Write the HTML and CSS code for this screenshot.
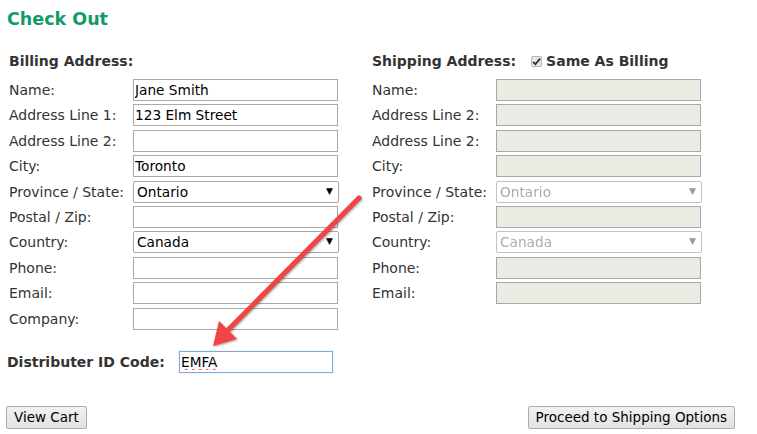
FILE: index.html
```html
<!DOCTYPE html>
<html lang="en">
<head>
    <meta charset="UTF-8">
    <title>Check Out</title>
    <link rel="stylesheet" href="styles.css">
</head>
<body>
    <h1 class="page-title">Check Out</h1>

    <div class="columns">
        <section class="address">
            <h2 class="address-title">Billing Address:</h2>
            <div class="fields">
                <label>Name:</label>
                <input type="text" class="field-input" value="Jane Smith">
                <label>Address Line 1:</label>
                <input type="text" class="field-input" value="123 Elm Street">
                <label>Address Line 2:</label>
                <input type="text" class="field-input">
                <label>City:</label>
                <input type="text" class="field-input" value="Toronto">
                <label>Province / State:</label>
                <div class="select-wrap">
                    <select class="field-select"><option>Ontario</option></select>
                </div>
                <label>Postal / Zip:</label>
                <input type="text" class="field-input">
                <label>Country:</label>
                <div class="select-wrap">
                    <select class="field-select"><option>Canada</option></select>
                </div>
                <label>Phone:</label>
                <input type="text" class="field-input">
                <label>Email:</label>
                <input type="text" class="field-input">
                <label>Company:</label>
                <input type="text" class="field-input">
            </div>
        </section>

        <section class="address">
            <h2 class="address-title">
                Shipping Address:
                <span class="same-as">
                    <span class="check-box">
                        <svg width="9" height="9" viewBox="0 0 9 9"><path d="M1 4.8 L3.4 7.2 L8 1.6" fill="none" stroke="#333" stroke-width="1.8"/></svg>
                    </span>
                    Same As Billing
                </span>
            </h2>
            <div class="fields">
                <label>Name:</label>
                <input type="text" class="field-input" disabled>
                <label>Address Line 2:</label>
                <input type="text" class="field-input" disabled>
                <label>Address Line 2:</label>
                <input type="text" class="field-input" disabled>
                <label>City:</label>
                <input type="text" class="field-input" disabled>
                <label>Province / State:</label>
                <div class="select-wrap disabled">
                    <select class="field-select" disabled><option>Ontario</option></select>
                </div>
                <label>Postal / Zip:</label>
                <input type="text" class="field-input" disabled>
                <label>Country:</label>
                <div class="select-wrap disabled">
                    <select class="field-select" disabled><option>Canada</option></select>
                </div>
                <label>Phone:</label>
                <input type="text" class="field-input" disabled>
                <label>Email:</label>
                <input type="text" class="field-input" disabled>
            </div>
        </section>
    </div>

    <div class="distributor">
        <label class="distributor-label">Distributer ID Code:</label>
        <input type="text" class="distributor-input" value="EMFA">
    </div>

    <div class="actions">
        <button class="action-button">View Cart</button>
        <button class="action-button">Proceed to Shipping Options</button>
    </div>

    <!-- annotation arrow drawn over the form -->
    <svg class="annotation" width="757" height="434" viewBox="0 0 757 434">
        <g class="annotation-arrow">
            <line x1="359" y1="198" x2="228" y2="330" stroke="#f04545" stroke-width="5" stroke-linecap="round"/>
            <polygon points="213,346 219,321 237,339" fill="#f04545"/>
        </g>
    </svg>
</body>
</html>
```

FILE: styles.css
```css
body {
    margin: 0;
    padding: 0 7px;
    font-family: "DejaVu Sans", Verdana, sans-serif;
    font-size: 14px;
    color: #333;
    background-color: #ffffff;
    position: relative;
}
.page-title {
    margin: 0;
    padding-top: 8px;
    font-size: 17.5px;
    line-height: 22px;
    color: #129a69;
}
.columns {
    display: grid;
    grid-template-columns: 363px 1fr;
    margin-top: 21px;
    padding-left: 2px;
}
.address-title {
    margin: 0 0 8px 0;
    font-size: 14px;
    line-height: 20px;
    display: flex;
    align-items: center;
}
.same-as {
    display: inline-flex;
    align-items: center;
    margin-left: 15px;
}
.check-box {
    width: 11px;
    height: 11px;
    border: 1px solid #b5b5b5;
    border-radius: 2px;
    background-color: #e6e6e6;
    display: inline-flex;
    align-items: center;
    justify-content: center;
    box-sizing: border-box;
    margin-right: 4px;
}
.fields {
    display: grid;
    grid-template-columns: 124px 206px;
    grid-auto-rows: 22px;
    row-gap: 3.4px;
    align-items: center;
}
.fields label {
    white-space: nowrap;
}
.field-input {
    width: 205px;
    height: 22px;
    box-sizing: border-box;
    border: 1px solid #a9a9a9;
    padding: 0 1px;
    font-family: inherit;
    font-size: 13.7px;
    color: #000;
    background-color: #fff;
    margin: 0;
}
.field-input:disabled {
    background-color: #ebebe4;
}
.select-wrap {
    position: relative;
    width: 206px;
    height: 22px;
}
.select-wrap::after {
    content: "▼";
    position: absolute;
    right: 6px;
    top: 5px;
    font-size: 9px;
    color: #000;
    pointer-events: none;
}
.select-wrap.disabled::after {
    color: #999;
}
.field-select {
    appearance: none;
    width: 206px;
    height: 22px;
    box-sizing: border-box;
    border: 1px solid #a9a9a9;
    border-radius: 2px;
    padding: 0 3px;
    font-family: inherit;
    font-size: 13.7px;
    color: #000;
    background-color: #fff;
    margin: 0;
}
.field-select:disabled {
    color: #888;
}
.distributor {
    display: grid;
    grid-template-columns: 172px 154px;
    align-items: center;
    margin-top: 21px;
}
.distributor-label {
    font-weight: bold;
    white-space: nowrap;
}
.distributor-input {
    height: 22px;
    box-sizing: border-box;
    border: 1px solid #7ea9d9;
    box-shadow: 0 0 1px #a9c8ea;
    padding: 0 1px;
    font-family: inherit;
    font-size: 13.7px;
    color: #000;
    text-decoration: underline wavy #e04040;
    text-decoration-thickness: 1px;
    margin: 0;
}
.distributor-input:focus {
    outline: none;
}
.actions {
    display: flex;
    justify-content: space-between;
    margin: 33px 15px 0 -1px;
}
.action-button {
    height: 23px;
    padding: 0 7px;
    font-family: inherit;
    font-size: 13.5px;
    color: #000;
    border: 1px solid #acacac;
    border-radius: 2px;
    background: linear-gradient(#f2f2f2, #e2e2e2);
    cursor: pointer;
}
.annotation {
    position: absolute;
    left: 0;
    top: 0;
    pointer-events: none;
}
.annotation-arrow {
    filter: drop-shadow(1px 1px 1px rgba(0, 0, 0, 0.35));
}
```
